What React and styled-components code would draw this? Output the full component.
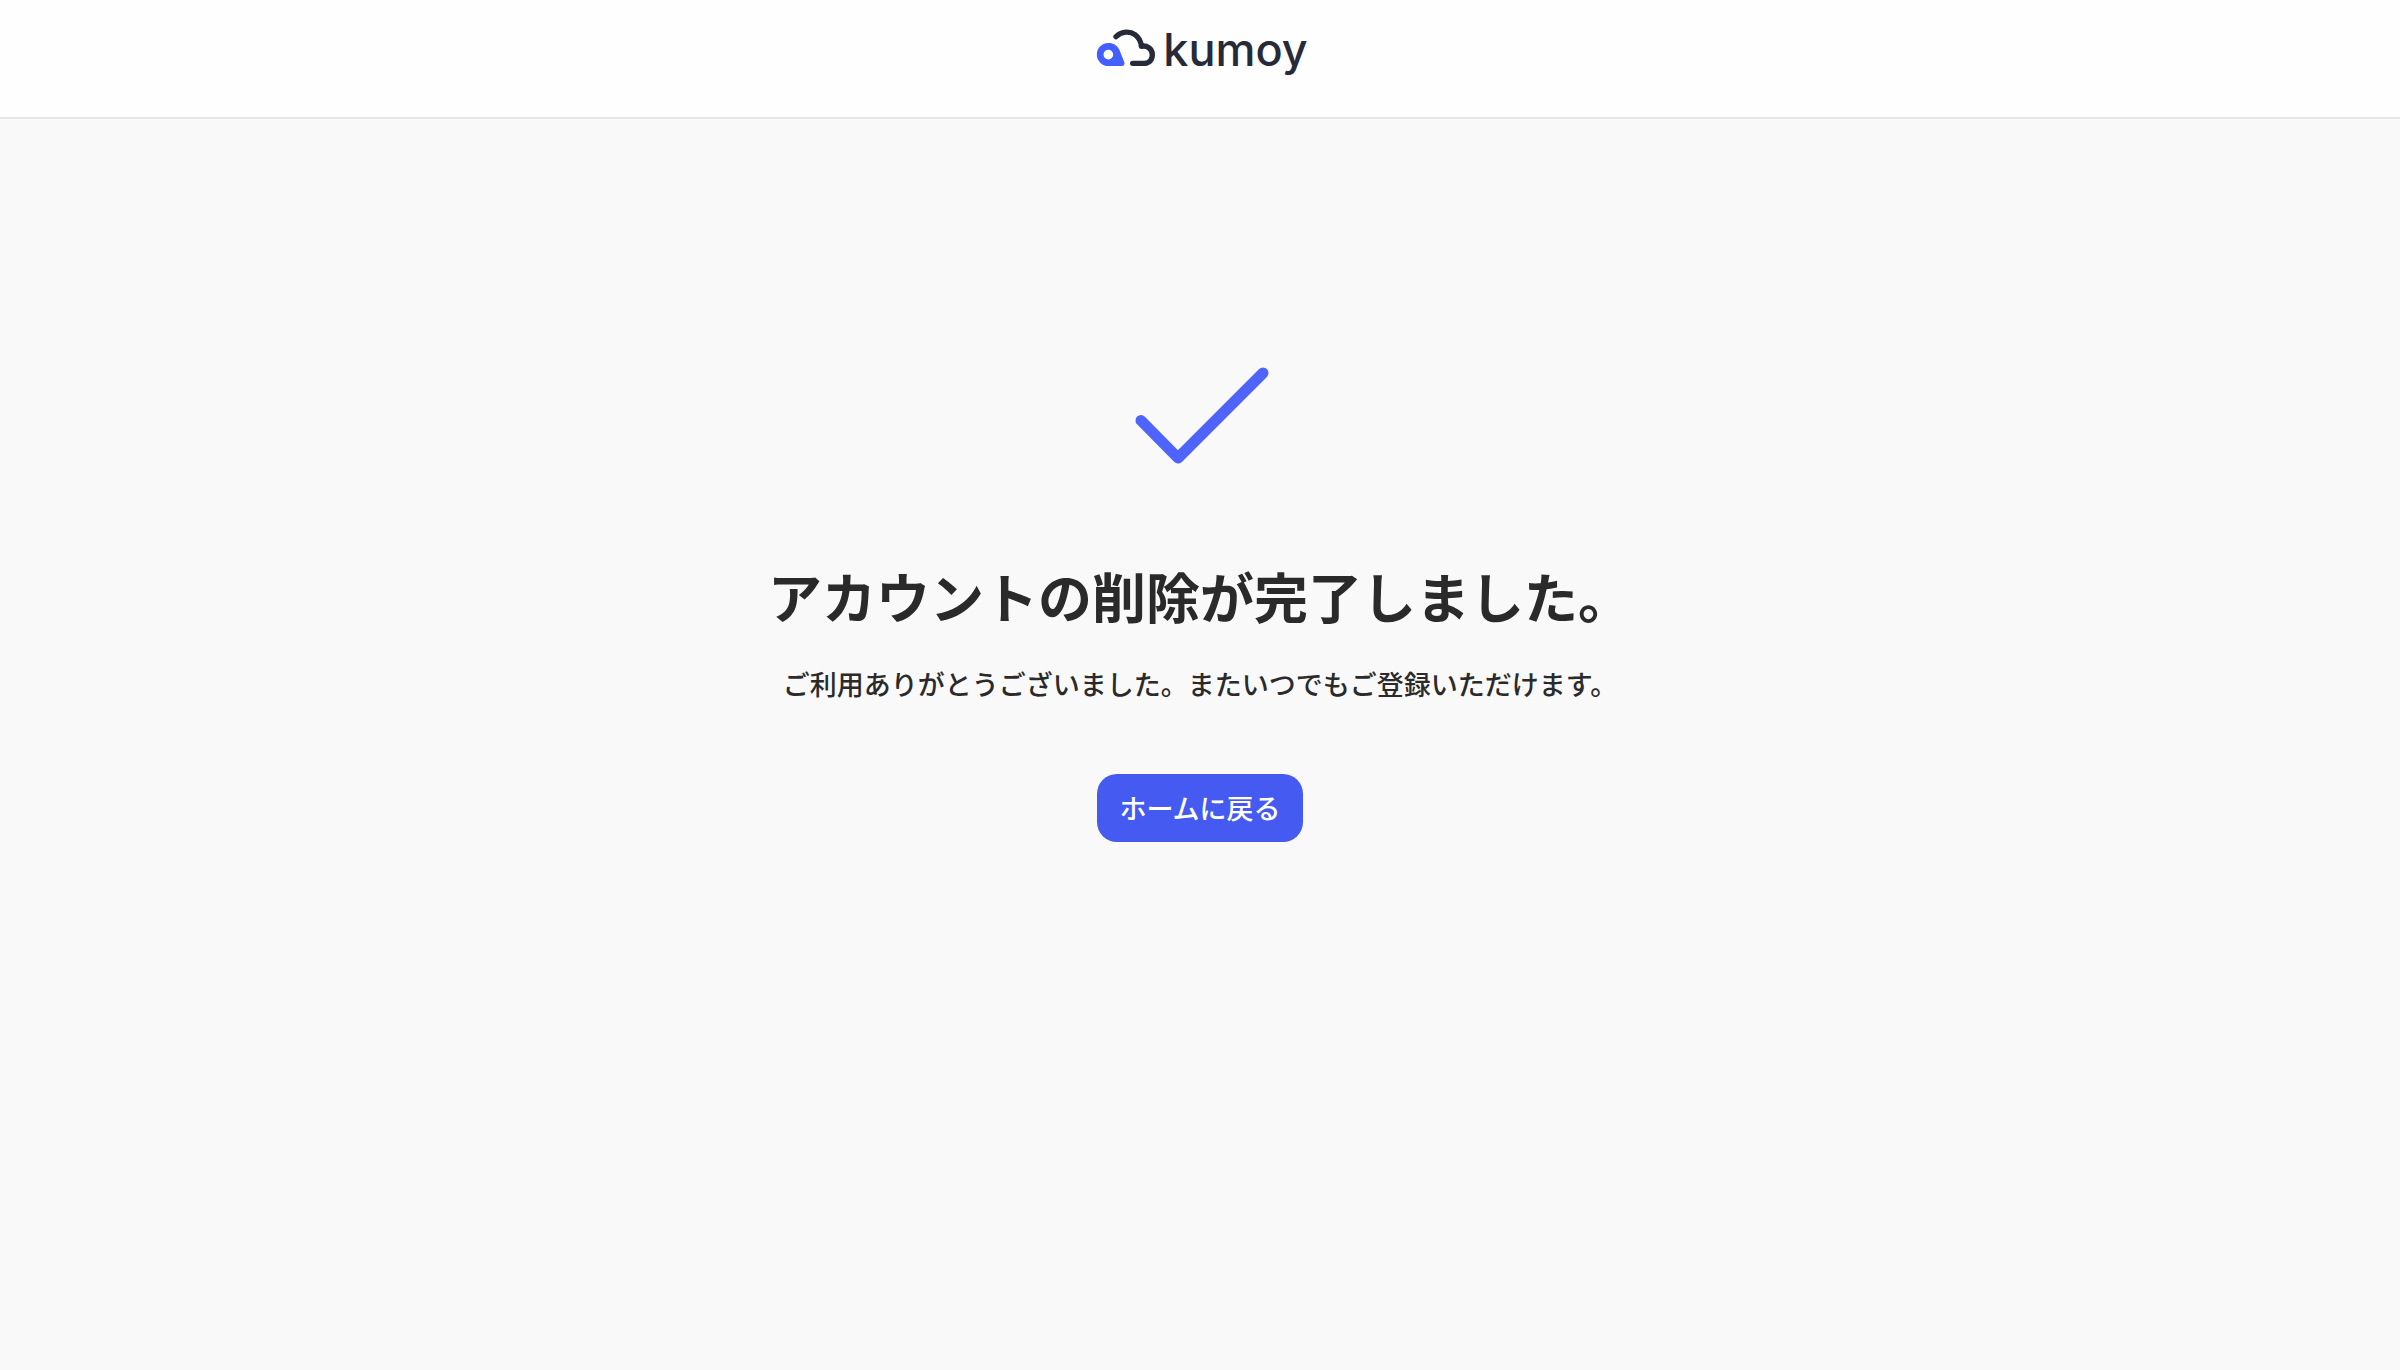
import React from "react"
import styled, { createGlobalStyle } from "styled-components"

const GlobalStyle = createGlobalStyle`
  * {
    box-sizing: border-box;
  }
  body {
    margin: 0;
    background: #f9f9f9;
    color: #2a2a2a;
    font-family: "Noto Sans CJK JP", sans-serif;
  }
`

const Page = styled.div`
  display: flex;
  flex-direction: column;
  min-height: 100vh;
`

const Header = styled.header`
  display: flex;
  justify-content: center;
  padding: 20px 24px 37px;
  background: #fefefe;
  border-bottom: 2px solid #e6e6e6;
`

const LogoLink = styled.a`
  display: flex;
  align-items: flex-start;
  gap: 7px;
  padding-left: 4px;
  color: #262a39;
  text-decoration: none;
`

const LogoMark = styled.svg`
  width: 60px;
  height: 38px;
  margin-top: 9px;
`

const LogoText = styled.span`
  font: 500 45px / 60px Inter, sans-serif;
`

const Main = styled.main`
  display: flex;
  flex-direction: column;
  align-items: center;
  padding: 207px 24px 48px;
  text-align: center;
`

const CheckIcon = styled.svg`
  width: 180px;
  height: 180px;
`

const Title = styled.h1`
  margin: 50px 0 0;
  font-size: 54px;
  font-weight: 700;
  line-height: 80px;
`

const Description = styled.p`
  margin: 28px 0 0;
  font-size: 27px;
  font-weight: 500;
  line-height: 40px;
`

const HomeButton = styled.button`
  margin-top: 70px;
  padding: 14px 22px;
  border: none;
  border-radius: 20px;
  background: #455af0;
  color: #fff;
  font-family: inherit;
  font-size: 27px;
  font-weight: 500;
  line-height: 40px;
  cursor: pointer;
`

const Logo = () => (
  <LogoLink href="/">
    <LogoMark viewBox="20 26 180 114" aria-hidden="true">
      <path
        fill="#455eff"
        fillRule="evenodd"
        d="M57 68c16 0 27 8 33 20l15 38c2 6-1 11-7 11H57a34.500 34.500 0 0 1 0-69zM57 88.500a14.500 14.500 0 1 0 0 29a14.500 14.500 0 1 0 0-29z"
      />
      <path
        fill="none"
        stroke="#262a39"
        strokeWidth="16"
        strokeLinecap="round"
        strokeLinejoin="round"
        d="M80 49C98 32 122 32 137 43C149 52 155 63 156 78C172 74 189 85 189 103C189 119 179 129 163 129H130"
      />
    </LogoMark>
    <LogoText>kumoy</LogoText>
  </LogoLink>
)

const App = () => (
  <>
    <GlobalStyle />
    <Page>
      <Header>
        <Logo />
      </Header>
      <Main>
        <CheckIcon viewBox="0 0 180 180" aria-hidden="true">
          <path
            fill="none"
            stroke="#4f64ff"
            strokeWidth="11"
            strokeLinecap="round"
            strokeLinejoin="round"
            d="M31 94.500L68 132L153 47"
          />
        </CheckIcon>
        <Title>アカウントの削除が完了しました。</Title>
        <Description>
          ご利用ありがとうございました。またいつでもご登録いただけます。
        </Description>
        <HomeButton type="button">ホームに戻る</HomeButton>
      </Main>
    </Page>
  </>
)

export default App
